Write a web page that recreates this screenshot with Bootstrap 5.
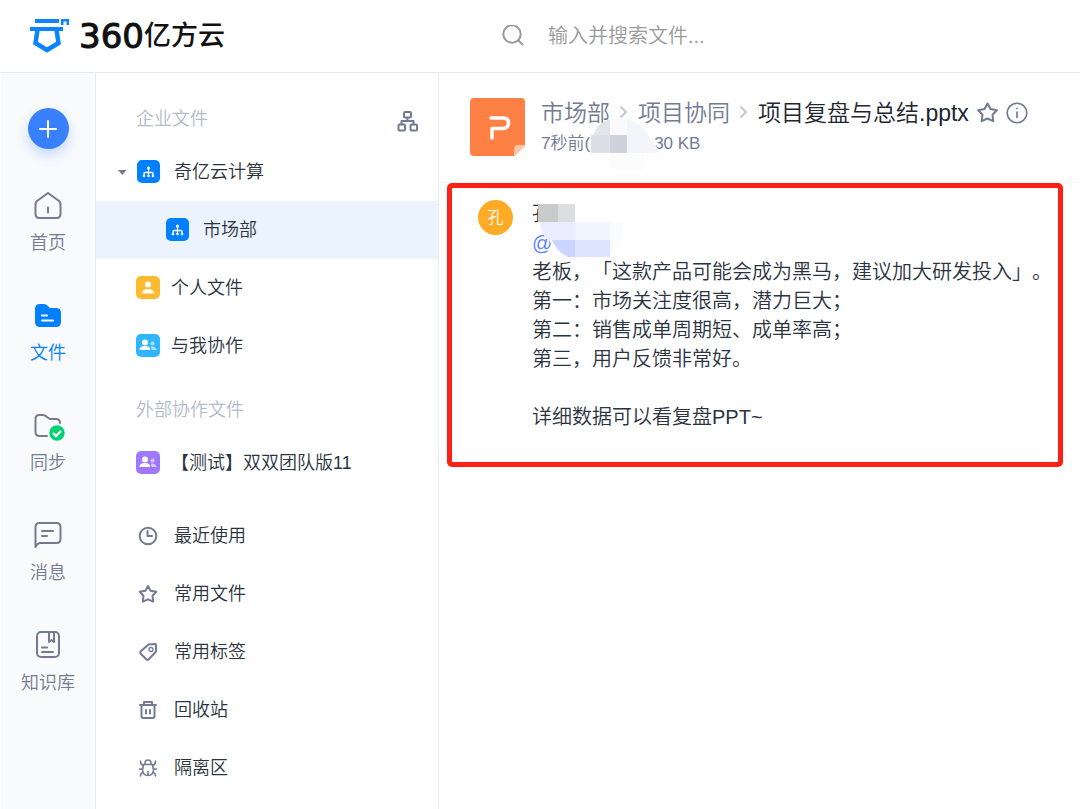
<!DOCTYPE html>
<html lang="zh-CN">
<head>
<meta charset="utf-8">
<meta name="viewport" content="width=device-width, initial-scale=1">
<title>360亿方云</title>
<link rel="stylesheet" href="https://cdn.jsdelivr.net/npm/bootstrap@5.3.0/dist/css/bootstrap.min.css">
<style>
  body { font-family: "Liberation Sans", "Noto Sans CJK SC", sans-serif; font-weight: 350; color: #2b3340; background: #fff; text-spacing-trim: space-all; }
  a, a:hover { color: inherit; text-decoration: none; }
  svg { display: block; flex: none; }
  .ln { fill: none; stroke: currentColor; stroke-width: 2; stroke-linecap: round; stroke-linejoin: round; }
  .topbar { height: 73px; border-bottom: 1px solid #e6e8ef; }
  .brand { width: 439px; padding-left: 29px; gap: 9px; color: #111; line-height: 40px; }
  .brand-num { font-family: "DejaVu Sans", sans-serif; font-size: 34px; font-weight: 400; -webkit-text-stroke: 1px #111; }
  .brand-cn { font-size: 27px; font-weight: 500; }
  .searchbox { padding-left: 63px; gap: 24px; color: #999; }
  .searchbox input { font-size: 20px; font-weight: 350; line-height: 30px; outline: 0; }
  .searchbox input::placeholder { color: #999; opacity: 1; }
  .rail { width: 96px; flex: none; background: #f8fafc; border-left: 1px solid #fff; border-right: 1px solid #e9ebf1; color: #737b92; padding-top: 35px; }
  .add-btn { width: 41px; height: 41px; background: #3880ff; box-shadow: 0 6px 12px #3880ff44; margin-bottom: 41px; }
  .rail-link { height: 110px; gap: 8px; font-size: 18px; line-height: 26px; }
  .rail-link.active { color: #0080ff; }
  .tree { width: 343px; flex: none; border-right: 1px solid #e9ebf1; font-size: 18px; padding-top: 27px; }
  .tree-head { height: 38px; margin: 0 19px 5px 40px; color: #b5bacb; }
  .tree-head.lower { margin-top: 16px; }
  .tree-row { height: 58px; padding-left: 40px; gap: 11px; }
  .tree-row.wide { gap: 14px; }
  .tree-row.root { padding-left: 21px; }
  .tree-row.child { padding-left: 69px; background: #ebf3ff; }
  .tree-row .ln { color: #737b92; }
  .tools { margin-top: 15px; }
  .doc-head { padding: 25px 31px; gap: 16px; border-bottom: 1px solid #f8f8fa; color: #737b92; }
  .crumbs { font-size: 23px; line-height: 30px; gap: 8px; }
  .crumbs h1 { font-size: 23px; font-weight: 350; line-height: 30px; color: #20262f; }
  .meta { font-size: 17px; line-height: 26px; margin-top: 3px; }
  .meta-gap { width: 64px; }
  .blur-meta { position: absolute; left: 152px; top: 44px; }
  .comment { margin: 0 17px 0 8px; border: 5px solid #ff2015; border-radius: 5px; padding: 12px 0 30px 26px; gap: 19px; }
  .avatar { width: 35px; height: 35px; background: #ffab25; color: #fff; font-size: 16px; flex: none; }
  .comment-text { font-size: 20px; line-height: 29px; white-space: nowrap; }
  .blur-name { position: absolute; left: 6px; top: 4px; }
  .mention { color: #5c83ff; }
</style>
</head>
<body>
<div class="d-flex flex-column min-vh-100">
  <header class="topbar d-flex align-items-center">
    <a class="brand d-flex align-items-center" href="#">
      <svg width="41" height="38" viewBox="0 0 41 38" fill="#0c84ff">
        <path d="M6 2H30V6H6ZM1 10H34V14H1ZM32 8V2H40V8H37.500V4.500H34.500V8Z"/>
        <path d="M8.500 13L6.500 26L18 33L29.500 26L27.500 13" fill="none" stroke="#0c84ff" stroke-width="4.500"/>
      </svg>
      <span class="d-flex align-items-center"><span class="brand-num">360</span><span class="brand-cn">亿方云</span></span>
    </a>
    <form class="searchbox d-flex align-items-center flex-grow-1">
      <svg class="ln" width="22" height="22" viewBox="0 0 22 22"><circle cx="10" cy="9" r="8.700"/><path d="M16.500 15.500L20.500 19.500"/></svg>
      <input class="border-0 bg-transparent p-0 flex-grow-1" type="text" aria-label="搜索" placeholder="输入并搜索文件...">
    </form>
  </header>
  <div class="d-flex flex-grow-1">
    <nav class="rail d-flex flex-column align-items-center">
      <button class="add-btn btn border-0 rounded-circle p-0 d-flex align-items-center justify-content-center" type="button" aria-label="新建">
        <svg class="ln text-white" width="20" height="20" viewBox="0 0 20 20"><path d="M10 2V18M2 10H18"/></svg>
      </button>
      <a class="rail-link d-flex flex-column align-items-center" href="#">
        <svg class="ln" width="30" height="32" viewBox="0 0 30 32"><path d="M15 3L26 11Q27.500 12.500 27.500 14V24Q27.500 28 23.500 28H6.500Q2.500 28 2.500 24V14Q2.500 12.500 4 11ZM15 17.500V22.500"/></svg>首页</a>
      <a class="rail-link active d-flex flex-column align-items-center" href="#">
        <svg width="30" height="32" viewBox="0 0 30 32" fill="currentColor"><path d="M2 9Q2 4 7 4H11Q13 4 15 6L17 8H23Q28 8 28 13V22Q28 27 23 27H7Q2 27 2 22Z"/><path d="M9 15.500H14M9 20.500H20" stroke="#fff" stroke-width="2" stroke-linecap="round"/></svg>文件</a>
      <a class="rail-link d-flex flex-column align-items-center" href="#">
        <svg width="34" height="32" viewBox="-2 0 34 32"><path class="ln" d="M14 26H6.500Q2.500 26 2.500 22V9Q2.500 5 6.500 5H10Q12 5 14 7L17 9H23Q27 9 27 13"/><circle cx="24" cy="23" r="7.700" fill="#00d271"/><path d="M20 23L23 26L28 21" fill="none" stroke="#fff" stroke-width="2.400"/></svg>同步</a>
      <a class="rail-link d-flex flex-column align-items-center" href="#">
        <svg class="ln" width="30" height="32" viewBox="0 0 30 32"><path d="M2.500 27V7Q2.500 3 6.500 3H23.500Q27.500 3 27.500 7V19Q27.500 23 23.500 23H7.500Q4.500 23 2.500 27ZM9 11H20M9 16H14"/></svg>消息</a>
      <a class="rail-link d-flex flex-column align-items-center" href="#">
        <svg class="ln" width="30" height="32" viewBox="0 0 30 32"><rect x="4" y="2" width="22" height="25" rx="4"/><path d="M16 3V12L18.500 10L21 12V3M9 17.500H14M9 22H20"/></svg>知识库</a>
    </nav>
    <nav class="tree">
      <div class="tree-head d-flex align-items-center justify-content-between">企业文件
        <a class="pt-1" href="#" aria-label="组织架构"><svg class="ln" width="23" height="23" viewBox="0 0 23 23" style="color:#737b92"><rect x="8" y="2" width="7" height="5.500" rx="1"/><rect x="2.500" y="14.500" width="6.500" height="6" rx="1"/><rect x="14.500" y="14.500" width="6.500" height="6" rx="1"/><path d="M11.500 8V11M5.500 14.500V11H17.500V14.500"/></svg></a>
      </div>
      <a class="tree-row root wide d-flex align-items-center" href="#">
        <svg width="43" height="24" viewBox="0 0 43 24"><path d="M1 10H9.500L5.300 15Z" fill="#737b92"/><rect x="20" y="0" width="23" height="23" rx="5" fill="#0080ff"/><g fill="#fff"><circle cx="31.500" cy="8" r="1.500"/><circle cx="27" cy="16" r="1.300"/><circle cx="31.500" cy="16" r="1.300"/><circle cx="36" cy="16" r="1.300"/></g><path d="M27 16V13.500Q27 12.500 28 12.500H35Q36 12.500 36 13.500V16M31.500 8V16" stroke="#fff" stroke-width="1.300" fill="none"/></svg>
        奇亿云计算</a>
      <a class="tree-row child wide d-flex align-items-center" href="#">
        <svg width="24" height="24" viewBox="19 0 24 24"><rect x="20" y="0" width="23" height="23" rx="5" fill="#0080ff"/><g fill="#fff"><circle cx="31.500" cy="8" r="1.500"/><circle cx="27" cy="16" r="1.300"/><circle cx="31.500" cy="16" r="1.300"/><circle cx="36" cy="16" r="1.300"/></g><path d="M27 16V13.500Q27 12.500 28 12.500H35Q36 12.500 36 13.500V16M31.500 8V16" stroke="#fff" stroke-width="1.300" fill="none"/></svg>
        市场部</a>
      <a class="tree-row d-flex align-items-center" href="#">
        <svg width="24" height="24" viewBox="0 1 24 24"><rect y="1" width="24" height="23" rx="5" fill="#ffbb30"/><g fill="#fff"><circle cx="12" cy="9.500" r="3"/><path d="M6 18.500Q6 14 12 14T18 18.500Z"/></g></svg>
        个人文件</a>
      <a class="tree-row d-flex align-items-center" href="#">
        <svg width="24" height="24" viewBox="0 0 24 24"><rect width="24" height="23" rx="5" fill="#2fb6ff"/><g fill="#fff"><circle cx="9" cy="8.500" r="3"/><path d="M3.500 16Q3.500 12 9 12T14 16Z"/><g opacity=".6"><circle cx="16.500" cy="9.500" r="2"/><path d="M15 12.500Q20 12 20.500 16H15.500Z"/></g></g></svg>
        与我协作</a>
      <div class="tree-head lower d-flex align-items-center">外部协作文件</div>
      <a class="tree-row d-flex align-items-center" href="#">
        <svg width="24" height="24" viewBox="0 1 24 24"><rect y="1" width="24" height="23" rx="5" fill="#9f78ff"/><g fill="#fff"><circle cx="9" cy="9.500" r="3"/><path d="M3.500 17Q3.500 13 9 13T14 17Z"/><g opacity=".6"><circle cx="16.500" cy="10.500" r="2"/><path d="M15 13.500Q20 13 20.500 17H15.500Z"/></g></g></svg>
        【测试】双双团队版11</a>
      <div class="tools">
        <a class="tree-row wide d-flex align-items-center" href="#">
          <svg class="ln" width="24" height="24" viewBox="0 0 24 24"><circle cx="12" cy="12" r="8.300"/><path d="M11.500 7V12H16"/></svg>最近使用</a>
        <a class="tree-row wide d-flex align-items-center" href="#">
          <svg class="ln" width="24" height="24" viewBox="0 0 24 24"><path d="M12 4L14.500 8.800L20.300 9.800L16.500 13.800L17.200 19.600L12 17.300L6.800 19.600L7.500 13.800L3.700 9.800L9.500 8.800Z"/></svg>常用文件</a>
        <a class="tree-row wide d-flex align-items-center" href="#">
          <svg class="ln" width="24" height="24" viewBox="0 0 24 24"><path d="M12.500 4.500L19 4Q20 4 20 5V11.500L12.500 19.500Q11.500 20.300 10.500 19.500L4.500 13.500Q3.700 12.500 4.500 11.500Z"/><circle cx="15" cy="9.500" r="2" style="stroke-width:1.300"/></svg>常用标签</a>
        <a class="tree-row wide d-flex align-items-center" href="#">
          <svg class="ln" width="24" height="24" viewBox="0 0 24 24"><path d="M4 7H20M8 7V4H16V7M5.500 7V18Q5.500 20 7.500 20H16.500Q18.500 20 18.500 18V7M10 12V15.500M14 12V15.500"/></svg>回收站</a>
        <a class="tree-row wide d-flex align-items-center" href="#">
          <svg class="ln" width="24" height="24" viewBox="0 0 24 24"><g style="stroke-width:1.600"><path d="M9 8V7Q9 4 12 4T15 7V8M7.500 8.500H16.500L17.500 14Q17 19.500 12 19.500T6.500 14ZM12 15.500V19M7.500 9.500Q4.500 9 4.500 5M16.500 9.500Q19.500 9 19.500 5M3.500 13H6.500M17.500 13H20.500M7 16.500Q4.500 17 4.500 20M17 16.500Q19.500 17 19.500 20"/></g></svg>隔离区</a>
      </div>
    </nav>
    <main class="flex-grow-1">
      <div class="doc-head d-flex position-relative">
        <svg width="55" height="58" viewBox="0 0 55 58"><path d="M4 0H51Q55 0 55 4V48L44 58H4Q0 58 0 54V4Q0 0 4 0Z" fill="#ff8044"/><path d="M55 47V48L44 58V51Q44 47 48 47Z" fill="#ffc3a5"/><path d="M21 20H33Q38.500 20 38.500 25T33 30.500H22V40" fill="none" stroke="#fff" stroke-width="3.500" stroke-linecap="round" stroke-linejoin="round"/></svg>
        <div>
          <div class="crumbs d-flex align-items-center text-nowrap">
            <a href="#">市场部</a>
            <svg class="ln" width="12" height="20" viewBox="0 0 12 20" style="color:#c3c7d6"><path d="M3 4L8 9L3 14"/></svg>
            <a href="#">项目协同</a>
            <svg class="ln" width="12" height="20" viewBox="0 0 12 20" style="color:#c3c7d6"><path d="M3 4L8 9L3 14"/></svg>
            <h1 class="m-0">项目复盘与总结.pptx</h1>
            <button class="btn border-0 p-0" type="button" aria-label="收藏"><svg class="ln" width="21" height="22" viewBox="0 0 21 22" style="color:#737b92"><path d="M10.500 1.500L13.500 7L19.800 8.200L15.500 12.800L16.300 19.200L10.500 16.500L4.700 19.200L5.500 12.800L1.200 8.200L7.500 7Z"/></svg></button>
            <button class="btn border-0 p-0" type="button" aria-label="信息"><svg class="ln" width="22" height="22" viewBox="0 0 22 22" style="color:#737b92"><circle cx="11" cy="11" r="9.800" style="stroke-width:1.600"/><path d="M11 10V15.500M11 6.300V6.500" style="stroke-width:1.700"/></svg></button>
          </div>
          <div class="meta d-flex text-nowrap"><span>7秒前(</span><span class="meta-gap"></span><span>30 KB</span></div>
        </div>
        <svg class="blur-meta" width="70" height="62" viewBox="0 0 70 62">
          <path d="M0 34Q-1 22 4 14Q9 5 19 2V36H0Z" fill="#e4e5ea"/>
          <path d="M19 2Q28 -1 36 2V18H19Z" fill="#fafafc"/>
          <path d="M36 2Q46 5 53 12L67 32Q69 36 64 36H36Z" fill="#f4f5f8"/>
          <path d="M0 18H19V36H0Z" fill="#dcdfe5"/><path d="M19 18H36V36H19Z" fill="#cfd2dc"/>
          <path d="M19 36H53V53H19Z" fill="#fcfcfd"/>
        </svg>
      </div>
      <article class="comment d-flex">
        <div class="avatar rounded-circle d-flex align-items-center justify-content-center">孔</div>
        <div class="comment-text position-relative">
          <div>孔</div>
          <div><a class="mention" href="#">@</a></div>
          <div>老板，「这款产品可能会成为黑马，建议加大研发投入」。</div>
          <div>第一：市场关注度很高，潜力巨大；</div>
          <div>第二：销售成单周期短、成单率高；</div>
          <div>第三，用户反馈非常好。</div>
          <div><br></div>
          <div>详细数据可以看复盘PPT~</div>
          <svg class="blur-name" width="86" height="57" viewBox="0 0 86 57">
            <path d="M0 0H20V18H0Z" fill="#c9cacc"/><path d="M20 0H37V18H20Z" fill="#dcdfdf"/>
            <path d="M2 18H85Q87 34 76 46Q66 56 44 56L37 53H30Q17 48 11 36Q2 30 2 18Z" fill="#fafbfe"/>
            <path d="M2 18H37V36H11Q2 30 2 18Z" fill="#e8eeff"/><path d="M37 18H72V36H37Z" fill="#f1f5ff"/>
            <path d="M14 36H37V53H30Q19 48 14 36Z" fill="#cad6ff"/><path d="M37 36H72V53H37Z" fill="#dce4ff"/>
          </svg>
        </div>
      </article>
    </main>
  </div>
</div>
<script src="https://cdn.jsdelivr.net/npm/bootstrap@5.3.0/dist/js/bootstrap.bundle.min.js"></script>
</body>
</html>
